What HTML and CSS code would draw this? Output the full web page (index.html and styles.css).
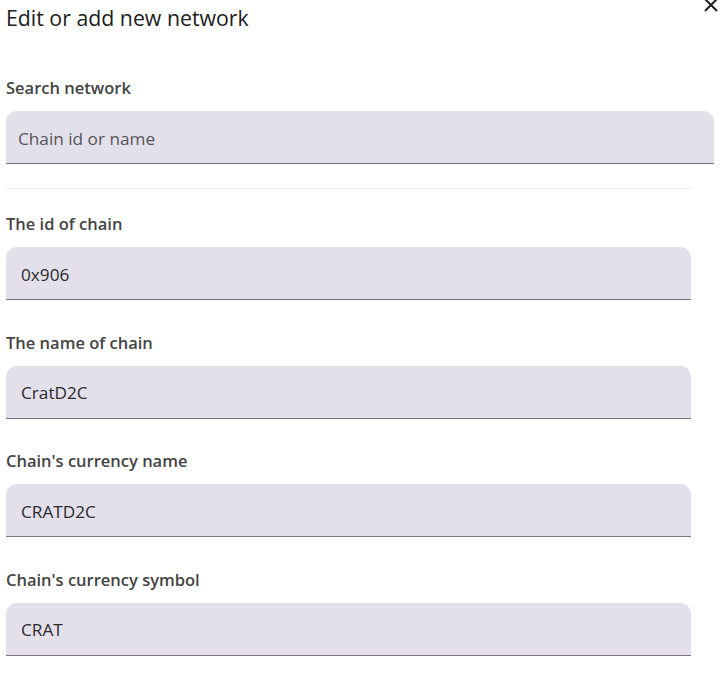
FILE: index.html
```html
<!DOCTYPE html>
<html lang="en">
<head>
<meta charset="utf-8">
<title>Edit or add new network</title>
<link rel="stylesheet" href="styles.css">
</head>
<body>
<div class="dialog">
  <header class="dialog-header">
    <h1 class="dialog-title">Edit or add new network</h1>
    <button class="close-btn" aria-label="Close">
      <svg width="16" height="16" viewBox="0 0 16 16"><path d="M2 2 L14 14 M14 2 L2 14" stroke="#1f1f1f" stroke-width="2" fill="none"/></svg>
    </button>
  </header>

  <section class="search">
    <label class="field-label">Search network</label>
    <div class="field field-wide">
      <span class="placeholder">Chain id or name</span>
    </div>
  </section>

  <hr class="divider">

  <section class="form">
    <div class="group">
      <label class="field-label">The id of chain</label>
      <div class="field"><span class="value">0x906</span></div>
    </div>
    <div class="group">
      <label class="field-label">The name of chain</label>
      <div class="field"><span class="value">CratD2C</span></div>
    </div>
    <div class="group">
      <label class="field-label">Chain's currency name</label>
      <div class="field"><span class="value">CRATD2C</span></div>
    </div>
    <div class="group">
      <label class="field-label">Chain's currency symbol</label>
      <div class="field"><span class="value">CRAT</span></div>
    </div>
  </section>
</div>
</body>
</html>
```

FILE: styles.css
```css
* { box-sizing: border-box; }

html, body {
  margin: 0;
  padding: 0;
  background: #ffffff;
}

body {
  font-family: "Open Sans", "Noto Sans", "Liberation Sans", sans-serif;
  color: #222;
  width: 720px;
  height: 678px;
  overflow: hidden;
}

.dialog {
  position: relative;
  padding: 0 6px;
}

.dialog-header {
  height: 76px;
}

.dialog-title {
  margin: 0;
  font-size: 21.3px;
  font-weight: 400;
  line-height: 36px;
  color: #202020;
}

.close-btn {
  position: absolute;
  top: -3px;
  right: 1px;
  width: 16px;
  height: 16px;
  padding: 0;
  border: 0;
  background: transparent;
}

.close-btn svg { display: block; }

.field-label {
  display: block;
  font-size: 16.5px;
  font-weight: 600;
  line-height: 24px;
  color: #444;
  margin-bottom: 11px;
}

.field {
  height: 53px;
  background: #e3e0ec;
  border-radius: 11px 11px 0 0;
  border-bottom: 1px solid #79747e;
  display: flex;
  align-items: center;
  padding-left: 15px;
  padding-top: 2px;
  width: 685px;
  font-size: 17.2px;
  color: #2b2b2b;
}

.field-wide {
  width: 708px;
  padding-left: 12px;
}

.placeholder { color: #555; }

.value { color: #2b2b2b; }

.divider {
  border: 0;
  height: 1px;
  background: #efefef;
  width: 685px;
  margin: 24px 0 23px;
}

.form {
  display: flex;
  flex-direction: column;
  gap: 30.6px;
}
```
